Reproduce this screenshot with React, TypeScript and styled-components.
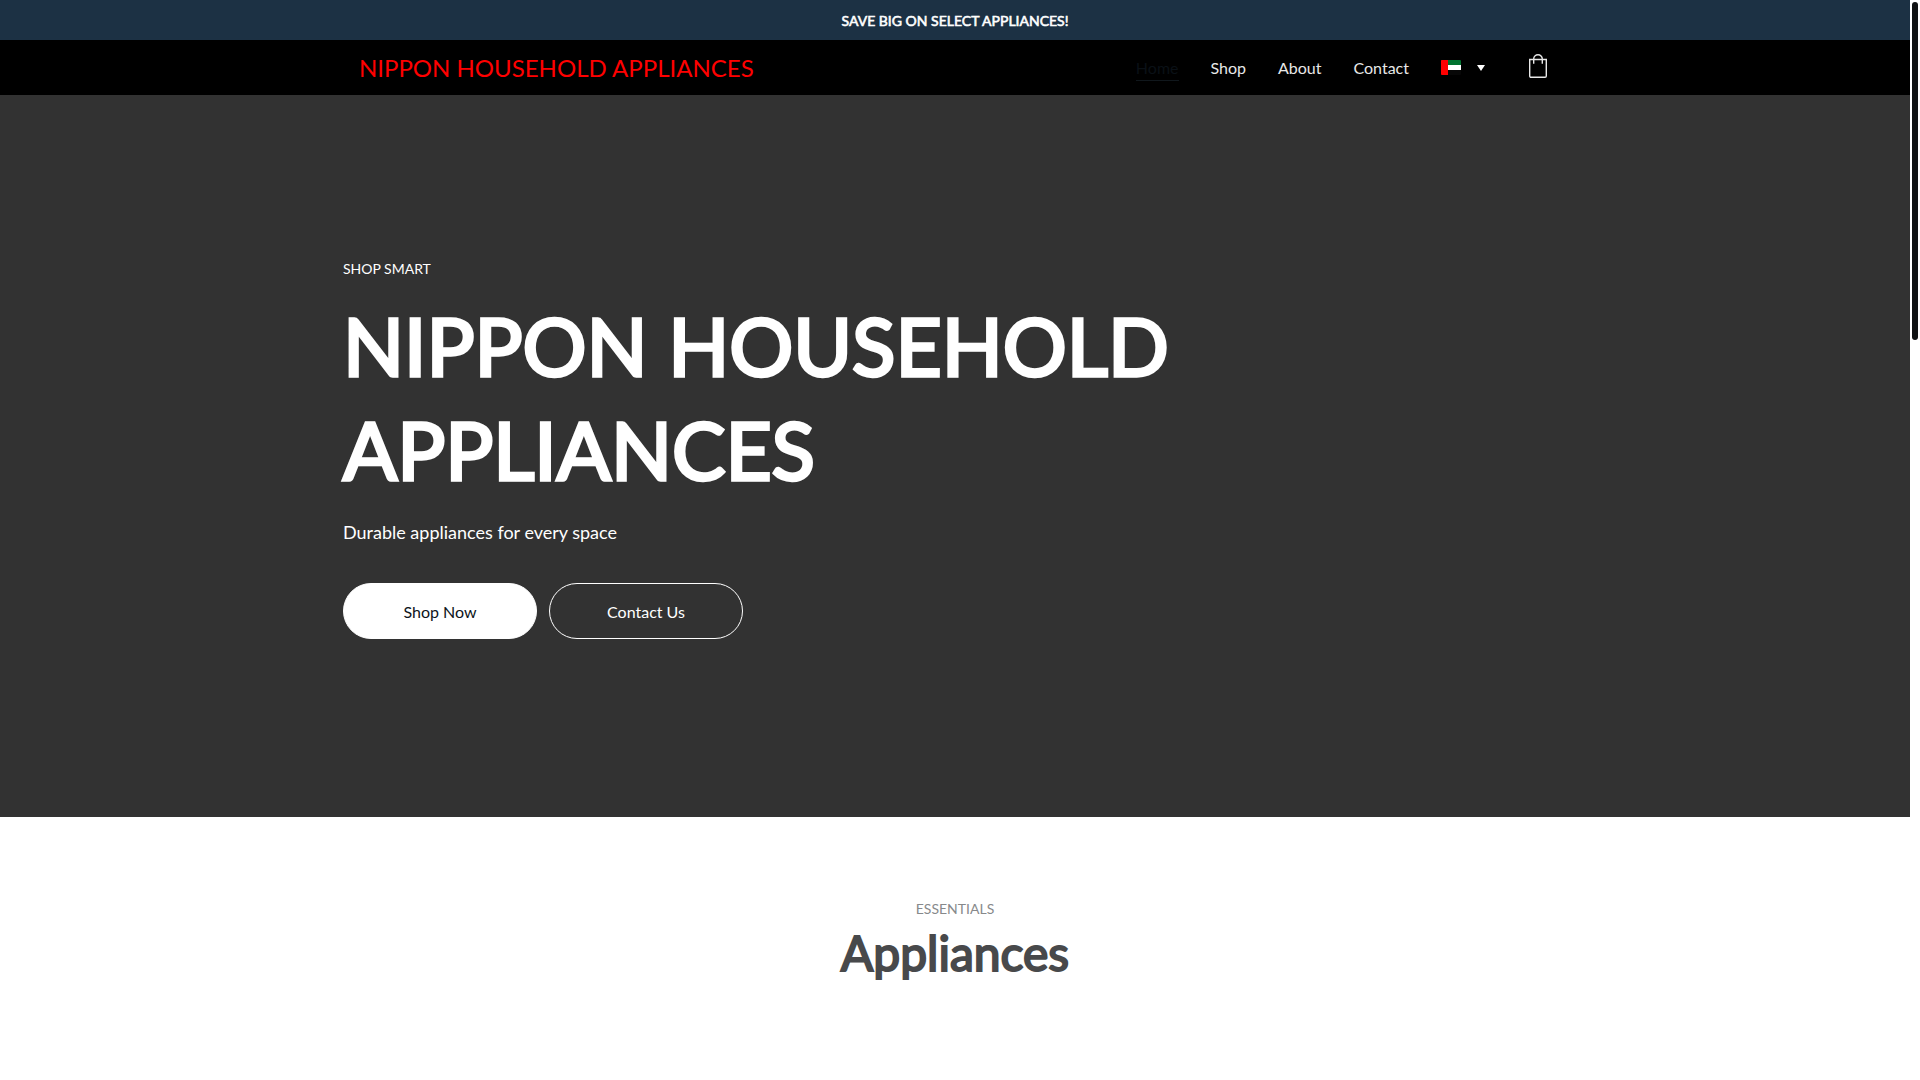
import React from "react";
import styled, { createGlobalStyle, css } from "styled-components";

const GlobalStyle = createGlobalStyle`
  *, *::before, *::after { box-sizing: border-box; }
  body {
    margin: 0;
    background: #ffffff;
    color: #ffffff;
    font-family: Lato, "Open Sans", sans-serif;
    font-size: 16px;
    line-height: 24px;
  }
  h1, h2, p { margin: 0; }
  a { color: inherit; text-decoration: none; }
`;

const heavy = css`
  font-weight: 400;
  -webkit-text-stroke: calc(1em / 24) currentColor;
`;

const Shell = styled.div`
  display: grid;
  grid-template-columns: minmax(0, 1fr) 10px;
  min-height: 100vh;
`;

const ScrollRail = styled.div`
  display: flex;
  justify-content: center;
  padding: 2px 0;
  background: #ffffff;
`;

const ScrollThumb = styled.div`
  width: 6px;
  height: 338px;
  border-radius: 3px;
  background: #0f1112;
`;

const Announcement = styled.p`
  padding: 9px 16px 7px;
  background: #1c3144;
  font-size: 14px;
  text-align: center;
  ${heavy}
`;

const Header = styled.header`
  background: #000000;
`;

const HeaderInner = styled.div`
  display: flex;
  align-items: center;
  justify-content: space-between;
  max-width: 1224px;
  min-height: 55px;
  margin: 0 auto;
  padding: 0 20px 0 16px;
`;

const Brand = styled.a`
  color: #ff0000;
  font-size: 24px;
  line-height: 32px;
`;

const Nav = styled.nav`
  display: flex;
  align-items: center;
  gap: 32px;
`;

const NavLink = styled.a<{ $active?: boolean }>`
  padding-top: 2px;
  border-bottom: 1px solid ${(p) => (p.$active ? "#10171c" : "transparent")};
  color: ${(p) => (p.$active ? "#0a1016" : "#e8e8e8")};
`;

const IconButton = styled.button`
  display: flex;
  align-items: center;
  gap: 16px;
  padding: 0;
  border: 0;
  background: none;
  color: #ffffff;
  cursor: pointer;
`;

const CartButton = styled(IconButton)`
  margin-left: 12px;
  padding-bottom: 3px;
`;

const Hero = styled.section`
  padding: 162px 16px 178px;
  background: #323232;
`;

const HeroInner = styled.div`
  max-width: 1224px;
  margin: 0 auto;
`;

const Eyebrow = styled.p<{ $muted?: boolean }>`
  color: ${(p) => (p.$muted ? "#87898b" : "#ffffff")};
  font-size: 14px;
  line-height: 24px;
`;

const HeroTitle = styled.h1`
  max-width: 880px;
  margin-top: 12px;
  font-size: 80px;
  line-height: 104px;
  ${heavy}
`;

const HeroText = styled.p`
  margin-top: 16px;
  font-size: 18px;
  line-height: 30px;
`;

const Actions = styled.div`
  display: flex;
  flex-wrap: wrap;
  gap: 12px;
  margin-top: 36px;
`;

const Action = styled.a<{ $filled?: boolean }>`
  display: flex;
  align-items: center;
  justify-content: center;
  width: 194px;
  height: 56px;
  padding-top: 2px;
  border: 1px solid #ffffff;
  border-radius: 28px;
  background: ${(p) => (p.$filled ? "#ffffff" : "transparent")};
  color: ${(p) => (p.$filled ? "#0d141a" : "#ffffff")};
`;

const Essentials = styled.section`
  padding: 80px 16px;
  text-align: center;
`;

const SectionTitle = styled.h2`
  color: #48494b;
  font-size: 48px;
  line-height: 64px;
  ${heavy}
`;

const links = ["Home", "Shop", "About", "Contact"];

const Flag = () => (
  <svg width="20" height="15" viewBox="0 0 20 15" aria-hidden="true">
    <clipPath id="flag-shape">
      <rect width="20" height="15" rx="1" />
    </clipPath>
    <g clipPath="url(#flag-shape)">
      <rect width="20" height="5" fill="#00732f" />
      <rect y="5" width="20" height="5" fill="#ffffff" />
      <rect y="10" width="20" height="5" fill="#070707" />
      <rect width="7" height="15" fill="#ff0000" />
    </g>
  </svg>
);

const Caret = () => (
  <svg width="8" height="6" viewBox="0 0 8 6" aria-hidden="true">
    <path d="M0 0h8L4 6z" fill="#ffffff" />
  </svg>
);

const Bag = () => (
  <svg width="18" height="24" viewBox="0 0 18 24" fill="none" stroke="#e8e8e8" strokeWidth="1.4" aria-hidden="true">
    <path d="M0.700 5.500h16.600v16.500a1.300 1.300 0 0 1-1.300 1.300h-14a1.300 1.300 0 0 1-1.300-1.300z" />
    <path d="M4.700 9.800V5a4.300 4.300 0 0 1 8.600 0v4.800" />
  </svg>
);

export default function App() {
  return (
    <>
      <GlobalStyle />
      <Shell>
        <div>
          <Announcement>SAVE BIG ON SELECT APPLIANCES!</Announcement>
          <Header>
            <HeaderInner>
              <Brand href="#">NIPPON HOUSEHOLD APPLIANCES</Brand>
              <Nav>
                {links.map((label, i) => (
                  <NavLink key={label} href="#" $active={i === 0}>
                    {label}
                  </NavLink>
                ))}
                <IconButton type="button" aria-label="Choose language" aria-haspopup="listbox">
                  <Flag />
                  <Caret />
                </IconButton>
                <CartButton type="button" aria-label="Shopping bag">
                  <Bag />
                </CartButton>
              </Nav>
            </HeaderInner>
          </Header>
          <main>
            <Hero>
              <HeroInner>
                <Eyebrow>SHOP SMART</Eyebrow>
                <HeroTitle>NIPPON HOUSEHOLD APPLIANCES</HeroTitle>
                <HeroText>Durable appliances for every space</HeroText>
                <Actions>
                  <Action href="#" $filled>
                    Shop Now
                  </Action>
                  <Action href="#">Contact Us</Action>
                </Actions>
              </HeroInner>
            </Hero>
            <Essentials>
              <Eyebrow $muted>ESSENTIALS</Eyebrow>
              <SectionTitle>Appliances</SectionTitle>
            </Essentials>
          </main>
        </div>
        <ScrollRail aria-hidden="true">
          <ScrollThumb />
        </ScrollRail>
      </Shell>
    </>
  );
}
